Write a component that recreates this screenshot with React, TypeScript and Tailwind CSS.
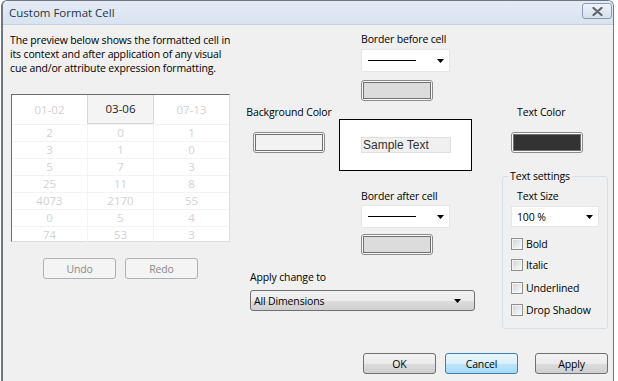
import React from 'react';

const rows = [
  ['2', '0', '1'],
  ['3', '1', '0'],
  ['5', '7', '3'],
  ['25', '11', '8'],
  ['4073', '2170', '55'],
  ['0', '5', '4'],
  ['74', '53', '3'],
];

const Arrow = () => (
  <svg width="7" height="4" viewBox="0 0 7 4">
    <polygon points="0,0 7,0 3.5,4" fill="#000" />
  </svg>
);

const Swatch = ({ fill }: { fill: string }) => (
  <div className="w-[72px] h-[21px] rounded-[3px] border border-[#8a8a8a] bg-[#fafafa] p-[1px]">
    <div className={`w-full h-full border border-[#707070] ${fill}`} />
  </div>
);

const LineDropdown = () => (
  <div className="w-[89px] h-[23px] bg-white border border-[#e3e6ea] flex items-center pl-[6px] pr-[5px]">
    <div className="w-[48px] h-[1px] bg-black" />
    <div className="ml-auto flex">
      <Arrow />
    </div>
  </div>
);

const Check = ({ label, className }: { label: string; className: string }) => (
  <div className={`flex items-center h-[12px] ${className}`}>
    <div className="w-[12px] h-[12px] border border-[#8e8f8f] bg-[#f4f4f4] p-[1px]">
      <div className="w-full h-full bg-linear-to-br from-[#d4d6d9] to-[#f8f8f8]" />
    </div>
    <span className="ml-[3px]">{label}</span>
  </div>
);

const winBtn =
  'w-[73px] h-[21px] rounded-[3px] border border-[#707070] bg-[linear-gradient(#f2f2f2_0%,#ebebeb_50%,#dddddd_51%,#cfcfcf_100%)] flex items-center justify-center';

export default function App() {
  return (
    <div className="w-[618px] h-[381px] bg-white overflow-hidden font-['Open_Sans',sans-serif] text-[10.5px] tracking-[-0.15px] leading-[14px] text-black">
      <div className="ml-[1px] w-[613px] h-[381px] flex flex-col rounded-t-[6px] border-l-2 border-t border-r border-[#6f7783] overflow-hidden">
        {/* title bar */}
        <div className="h-[24px] shrink-0 flex items-center pl-[6px] pr-[1px] bg-linear-to-b from-[#e3ebf6] to-[#d9e4f1] border-b border-[#c3d0df]">
          <span className="text-[11.5px] text-[#2a3442] tracking-normal">Custom Format Cell</span>
          <div className="ml-auto mb-[3px] w-[30px] h-[16px] rounded-[3px] border border-[#8d9bb0] bg-linear-to-b from-[#eef3f9] to-[#d6e0ec] flex items-center justify-center">
            <svg width="11" height="9" viewBox="0 0 11 9">
              <path d="M1.5 1 L9.5 8 M9.5 1 L1.5 8" stroke="#5c6470" strokeWidth="2.2" strokeLinecap="round" />
            </svg>
          </div>
        </div>

        {/* client */}
        <div className="flex-1 bg-[#f0f0f0] flex flex-col">
          <div className="flex pl-[7px]">
            {/* left column */}
            <div className="w-[221px] pt-[8px]">
              <p>
                The preview below shows the formatted cell in
                <br />
                its context and after application of any visual
                <br />
                cue and/or attribute expression formatting.
              </p>

              <div className="mt-[19px] ml-[1px] w-[219px] h-[148px] bg-white border-t border-l border-[#6d6d6d] border-r-[#dcdcdc] border-b-[#dcdcdc] border-r border-b text-[11.5px] tracking-normal text-[#d2d2d2]">
                <div className="grid grid-cols-[75px_67px_75px] h-[29px]">
                  <div className="flex items-center justify-center">01-02</div>
                  <div className="flex items-center justify-center bg-[#f4f4f4] border-l border-r border-b border-[#d8d8d8] text-[#222]">
                    03-06
                  </div>
                  <div className="flex items-center justify-center">07-13</div>
                </div>
                {rows.map((r, i) => (
                  <div key={i} className="grid grid-cols-[75px_67px_75px] h-[17px] border-t border-[#f3f3f3]">
                    {r.map((v, j) => (
                      <div
                        key={j}
                        className={`flex items-center justify-center ${j === 1 ? 'border-l border-r border-[#f3f3f3]' : ''}`}
                      >
                        {v}
                      </div>
                    ))}
                  </div>
                ))}
              </div>

              <div className="mt-[16px] flex justify-center gap-[9px] text-[#8a8a8a]">
                <div className="w-[73px] h-[21px] rounded-[3px] border border-[#adb2b5] bg-[#f4f4f4] flex items-center justify-center">
                  Undo
                </div>
                <div className="w-[73px] h-[21px] rounded-[3px] border border-[#adb2b5] bg-[#f4f4f4] flex items-center justify-center">
                  Redo
                </div>
              </div>
            </div>

            {/* right part */}
            <div className="ml-[16px] flex">
              <div className="w-[228px] flex flex-col">
                <div className="flex">
                  <div className="w-[84px] pt-[80px] flex flex-col items-center">
                    <span className="whitespace-nowrap">Background Color</span>
                    <div className="mt-[13px]">
                      <Swatch fill="bg-[#f2f2f2]" />
                    </div>
                  </div>

                  <div className="ml-[8px] w-[133px] flex flex-col">
                    <div className="pl-[22px] pt-[7px]">
                      <div>Border before cell</div>
                      <div className="mt-[3px]">
                        <LineDropdown />
                      </div>
                      <div className="mt-[8px]">
                        <Swatch fill="bg-[#dcdcdc]" />
                      </div>
                    </div>

                    <div className="mt-[18px] w-[133px] h-[52px] bg-white border border-black flex items-center pl-[21px]">
                      <div className="w-[90px] h-[16px] bg-[#f0f0f0] border border-[#e0e0e0] flex items-center pl-[1px] font-['Liberation_Sans',sans-serif] text-[12px] tracking-normal text-[#333]">
                        Sample Text
                      </div>
                    </div>

                    <div className="pl-[22px]">
                      <div className="mt-[18px]">Border after cell</div>
                      <div className="mt-[2px]">
                        <LineDropdown />
                      </div>
                      <div className="mt-[6px]">
                        <Swatch fill="bg-[#dcdcdc]" />
                      </div>
                    </div>
                  </div>
                </div>

                <div className="mt-[15px] pl-[3px]">
                  <div>Apply change to</div>
                  <div className="mt-[6px] w-[225px] h-[21px] rounded-[3px] border border-[#707070] bg-[linear-gradient(#f2f2f2_0%,#ebebeb_50%,#dddddd_51%,#cfcfcf_100%)] flex items-center pl-[3px] pr-[13px]">
                    <span>All Dimensions</span>
                    <div className="ml-auto flex">
                      <Arrow />
                    </div>
                  </div>
                </div>
              </div>

              <div className="ml-[27px] w-[106px] pt-[80px] flex flex-col">
                <span className="pl-[15px]">Text Color</span>
                <div className="mt-[13px] ml-[9px]">
                  <Swatch fill="bg-[#333333]" />
                </div>

                <fieldset className="mt-[16px] w-[106px] rounded-[3px] border border-[#d5dfe5] pl-[8px] pb-[12px]">
                  <legend className="px-[2px] -ml-[3px]">Text settings</legend>
                  <div className="mt-[6px] ml-[6px]">Text Size</div>
                  <div className="mt-[3px] w-[88px] h-[21px] bg-white border border-[#e3e6ea] flex items-center pl-[5px] pr-[5px]">
                    <span>100 %</span>
                    <div className="ml-auto flex">
                      <Arrow />
                    </div>
                  </div>
                  <Check label="Bold" className="mt-[11px]" />
                  <Check label="Italic" className="mt-[9px]" />
                  <Check label="Underlined" className="mt-[11px]" />
                  <Check label="Drop Shadow" className="mt-[10px]" />
                </fieldset>
              </div>
            </div>
          </div>

          {/* dialog buttons */}
          <div className="mt-auto flex justify-end pr-[5px] pb-[7px]">
            <div className={winBtn}>OK</div>
            <div className="ml-[9px] w-[73px] h-[21px] rounded-[3px] border border-[#3c7fb1] bg-[linear-gradient(#eaf6fd_0%,#d9f0fc_50%,#bee6fd_51%,#a7d9f5_100%)] flex items-center justify-center">
              Cancel
            </div>
            <div className={`ml-[17px] ${winBtn}`}>Apply</div>
          </div>
        </div>
      </div>
    </div>
  );
}
